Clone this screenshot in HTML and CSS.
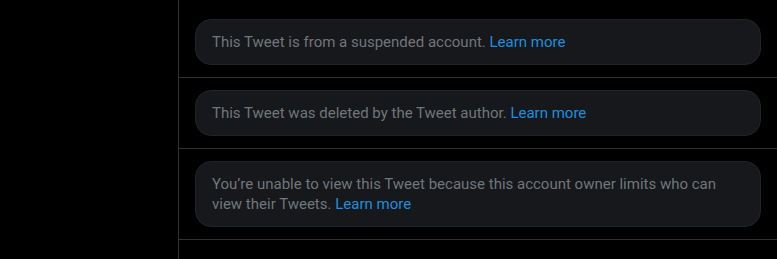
FILE: index.html
```html
<!DOCTYPE html>
<html>
<head>
<meta charset="utf-8">
<link rel="stylesheet" href="styles.css">
</head>
<body>
<div class="layout">
  <div class="sidebar"></div>
  <main class="timeline">
    <div class="list">
      <div class="cell">
        <div class="notice"><span>This Tweet is from a suspended account.</span> <a class="link" href="#">Learn more</a></div>
      </div>
      <div class="cell">
        <div class="notice"><span>This Tweet was deleted by the Tweet author.</span> <a class="link" href="#">Learn more</a></div>
      </div>
      <div class="cell">
        <div class="notice"><span>You’re unable to view this Tweet because this account owner limits who can view their Tweets.</span> <a class="link" href="#">Learn more</a></div>
      </div>
    </div>
  </main>
</div>
</body>
</html>
```
FILE: styles.css
```css
html, body {
  margin: 0;
  padding: 0;
  background: #000;
  height: 100%;
}
body {
  font-family: Roboto, "Liberation Sans", sans-serif;
  font-size: 15px;
  line-height: 20px;
  color: #71767b;
}
.layout {
  display: flex;
  min-height: 100%;
}
.sidebar {
  width: 178px;
  flex: none;
}
.timeline {
  flex: 1;
  border-left: 1px solid #2f3336;
}
.list {
  padding-top: 7px;
}
.cell {
  padding: 12px 16px;
  border-bottom: 1px solid #2f3336;
}
.notice {
  background: #16181c;
  border: 1px solid #202327;
  border-radius: 16px;
  padding: 12px 16px;
}
.link {
  color: #1d8fde;
  text-decoration: none;
}
```
